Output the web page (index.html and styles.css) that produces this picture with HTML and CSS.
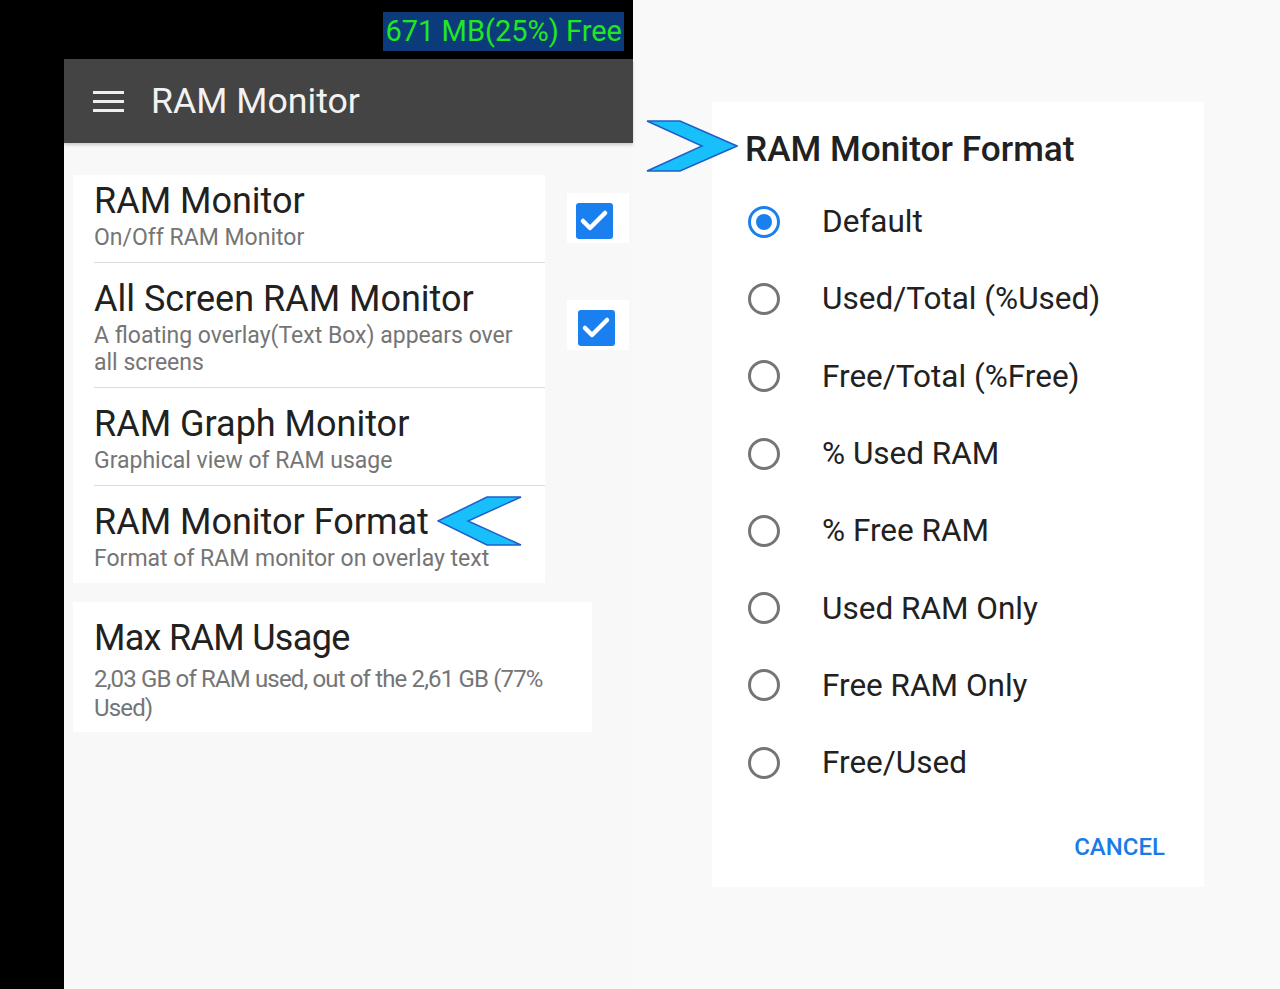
FILE: index.html
```html
<!DOCTYPE html>
<html lang="en">
<head>
  <meta charset="UTF-8">
  <meta name="viewport" content="width=device-width, initial-scale=1">
  <title>RAM Monitor</title>
  <link rel="stylesheet" href="styles.css">
</head>
<body>

  <div class="page">

    <div class="phone">
      <div class="statusbar">
        <span class="ram-badge">671 MB(25%) Free</span>
      </div>
      <div class="phone-main">
        <div class="edge"></div>
        <div class="screen">
          <header class="appbar">
            <svg class="menu-icon" width="31" height="21" viewBox="0 0 31 21">
              <rect x="0" y="0" width="31" height="3" fill="#eee"/>
              <rect x="0" y="9" width="31" height="3" fill="#eee"/>
              <rect x="0" y="18" width="31" height="3" fill="#eee"/>
            </svg>
            <h1 class="appbar-title">RAM Monitor</h1>
          </header>

          <div class="prefs">
            <div class="pref-row">
              <div class="card">
                <div class="pref">
                  <div class="pref-title">RAM Monitor</div>
                  <div class="pref-sub">On/Off RAM Monitor</div>
                </div>
                <div class="pref">
                  <div class="pref-title">All Screen RAM Monitor</div>
                  <div class="pref-sub">A floating overlay(Text Box) appears over all screens</div>
                </div>
                <div class="pref">
                  <div class="pref-title">RAM Graph Monitor</div>
                  <div class="pref-sub">Graphical view of RAM usage</div>
                </div>
                <div class="pref">
                  <div class="pref-title">RAM Monitor Format<svg class="pointer-left" width="86" height="50" viewBox="0 0 86 50"><polygon points="1,25 50,1 84,1 31,25 84,49 50,49" fill="#18c0fb" stroke="#1f5fc9" stroke-width="1.5" stroke-linejoin="miter"/></svg></div>
                  <div class="pref-sub">Format of RAM monitor on overlay text</div>
                </div>
              </div>

              <div class="toggles">
                <div class="toggle first">
                  <svg width="37" height="36" viewBox="0 0 37 36"><rect width="37" height="36" rx="3" fill="#1a80f0"/><path d="M7 18 L14 25 L29 10" fill="none" stroke="#fff" stroke-width="4.5" stroke-linecap="round" stroke-linejoin="round"/></svg>
                </div>
                <div class="toggle second">
                  <svg width="37" height="36" viewBox="0 0 37 36"><rect width="37" height="36" rx="3" fill="#1a80f0"/><path d="M7 18 L14 25 L29 10" fill="none" stroke="#fff" stroke-width="4.5" stroke-linecap="round" stroke-linejoin="round"/></svg>
                </div>
              </div>
            </div>

            <div class="card card-usage">
              <div class="pref-title">Max RAM Usage</div>
              <div class="pref-sub">2,03 GB of RAM used, out of the 2,61 GB (77% Used)</div>
            </div>
          </div>
        </div>
      </div>
    </div>

    <div class="side">
      <div class="dialog">
        <svg class="pointer-right" width="92" height="52" viewBox="0 0 92 52"><polygon points="1,1 34,1 91,26 34,51 1,51 56,26" fill="#18c0fb" stroke="#1f5fc9" stroke-width="1.5"/></svg>
        <h2 class="dialog-title">RAM Monitor Format</h2>
        <ul class="options">
          <li class="option checked"><span class="radio"></span>Default</li>
          <li class="option"><span class="radio"></span>Used/Total (%Used)</li>
          <li class="option"><span class="radio"></span>Free/Total (%Free)</li>
          <li class="option"><span class="radio"></span>% Used RAM</li>
          <li class="option"><span class="radio"></span>% Free RAM</li>
          <li class="option"><span class="radio"></span>Used RAM Only</li>
          <li class="option"><span class="radio"></span>Free RAM Only</li>
          <li class="option"><span class="radio"></span>Free/Used</li>
        </ul>
        <div class="dialog-actions">
          <button class="btn-text">CANCEL</button>
        </div>
      </div>
    </div>

  </div>

</body>
</html>
```

FILE: styles.css
```css
* {
  margin: 0;
  padding: 0;
  box-sizing: border-box;
}
body {
  background: #f9f9f9;
  font-family: Roboto, "Noto Sans", sans-serif;
  color: #212121;
  width: 1280px;
  height: 989px;
  overflow: hidden;
}
.page {
  display: flex;
  height: 989px;
}

/* phone screenshot */
.phone {
  width: 633px;
  display: flex;
  flex-direction: column;
}
.statusbar {
  height: 59px;
  background: #000;
  display: flex;
  justify-content: flex-end;
  align-items: flex-start;
  padding: 12px 9px 0 0;
}
.ram-badge {
  background: #0c3b7c;
  color: #22e622;
  font-size: 29px;
  line-height: 39px;
  padding: 0 2px 0 2px;
}
.phone-main {
  flex: 1;
  display: flex;
}
.edge {
  width: 64px;
  background: #000;
}
.screen {
  flex: 1;
  background: #f8f8f8;
}
.appbar {
  height: 84px;
  background: #444;
  display: flex;
  align-items: center;
  padding-left: 29px;
  gap: 27px;
  box-shadow: 0 2px 3px rgba(0,0,0,0.18);
}
.menu-icon {
  display: block;
  margin-top: 1px;
}
.appbar-title {
  font-size: 35.7px;
  font-weight: 400;
  color: #f2f2f2;
  line-height: 40px;
  margin-top: -1px;
}

.prefs {
  padding: 32px 0 0 9px;
}
.pref-row {
  display: flex;
}
.card {
  background: #fff;
  width: 472px;
  padding-left: 21px;
}
.pref {
  padding: 16px 22px 11px 0;
  border-bottom: 1px solid #dcdcdc;
}
.pref:first-child {
  padding-top: 6px;
}
.pref:last-child {
  border-bottom: none;
}
.pref-title {
  font-size: 36px;
  line-height: 40px;
  color: #212121;
  white-space: nowrap;
}
.pref-sub {
  font-size: 23px;
  line-height: 27px;
  color: #757575;
  margin-top: 3px;
}
.pointer-left {
  vertical-align: -6px;
  margin: -8px 0 -6px 8px;
}

.toggles {
  margin-left: 22px;
  padding-top: 18px;
}
.toggle {
  width: 62px;
  height: 50px;
  background: #fff;
}
.toggle svg {
  display: block;
}
.toggle.first {
  padding: 10px 0 0 9px;
}
.toggle.second {
  margin-top: 57px;
  padding: 10px 0 0 11px;
}

.card-usage {
  width: 519px;
  margin-top: 19px;
  padding: 16px 30px 9px 21px;
}
.card-usage .pref-title {
  letter-spacing: -0.7px;
}
.card-usage .pref-sub {
  font-size: 24px;
  line-height: 29px;
  letter-spacing: -0.85px;
  margin-top: 7px;
}

/* dialog */
.side {
  flex: 1;
  padding: 102px 0 0 79px;
}
.dialog {
  position: relative;
  width: 492px;
  background: #fff;
  padding: 27px 39px 26px 36px;
}
.pointer-right {
  position: absolute;
  left: -66px;
  top: 18px;
}
.dialog-title {
  font-size: 35.2px;
  font-weight: 500;
  line-height: 40px;
  color: #212121;
  margin-left: -3px;
}
.options {
  list-style: none;
  margin-top: 14px;
}
.option {
  height: 77.3px;
  display: flex;
  align-items: center;
  font-size: 31.5px;
  color: #212121;
}
.radio {
  width: 32px;
  height: 32px;
  border: 3.5px solid #757575;
  border-radius: 50%;
  margin-right: 42px;
  display: flex;
  align-items: center;
  justify-content: center;
}
.option.checked .radio {
  border-color: #1a80f0;
}
.option.checked .radio::after {
  content: "";
  width: 16px;
  height: 16px;
  border-radius: 50%;
  background: #1a80f0;
}
.dialog-actions {
  display: flex;
  justify-content: flex-end;
  margin-top: 32px;
}
.btn-text {
  background: none;
  border: none;
  font-family: Roboto, sans-serif;
  font-size: 24px;
  font-weight: 500;
  line-height: 28px;
  color: #1a7be8;
}
```
